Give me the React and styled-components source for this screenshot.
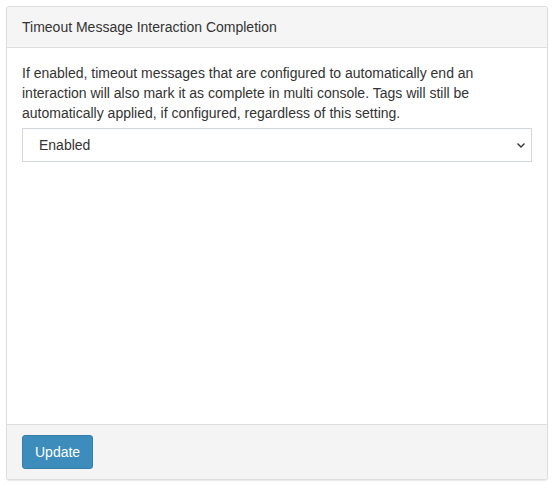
import React from 'react'
import styled, { createGlobalStyle } from 'styled-components'

const GlobalStyle = createGlobalStyle`
  body {
    margin: 0;
    background: #fff;
    font-family: "Liberation Sans", Arial, sans-serif;
    font-size: 14px;
    color: #333;
  }
`

const Page = styled.div`
  padding: 6px 9px 10px 6px;
`

const Panel = styled.div`
  display: flex;
  flex-direction: column;
  height: 474px;
  box-sizing: border-box;
  border: 1px solid #ddd;
  border-radius: 3px;
  box-shadow: 0 1px 1px rgba(0, 0, 0, 0.08);
  background: #fff;
`

const Heading = styled.div`
  padding: 10px 15px;
  line-height: 20px;
  background: #f5f5f5;
  border-bottom: 1px solid #ddd;
  border-radius: 3px 3px 0 0;
`

const Body = styled.div`
  flex: 1;
  padding: 15px;

  p {
    margin: 0 0 5px;
    line-height: 20px;
  }
`

const SelectWrap = styled.div`
  position: relative;

  svg {
    position: absolute;
    right: 6px;
    top: 13px;
    pointer-events: none;
  }
`

const Select = styled.select`
  appearance: none;
  width: 100%;
  height: 34px;
  box-sizing: border-box;
  padding: 0 16px;
  border: 1px solid #d2d6de;
  border-radius: 0;
  background: #fff;
  font-family: inherit;
  font-size: 14px;
  color: #333;
`

const Footer = styled.div`
  padding: 10px 15px;
  background: #f4f4f4;
  border-top: 1px solid #ddd;
  border-radius: 0 0 3px 3px;
`

const Button = styled.button`
  height: 34px;
  padding: 0 12px;
  background: #3c8dbc;
  border: 1px solid #367fa9;
  border-radius: 3px;
  color: #fff;
  font-family: inherit;
  font-size: 14px;
`

const App = () => (
  <Page>
    <GlobalStyle />
    <Panel>
      <Heading>Timeout Message Interaction Completion</Heading>
      <Body>
        <p>
          If enabled, timeout messages that are configured to automatically end an
          interaction will also mark it as complete in multi console. Tags will still be
          automatically applied, if configured, regardless of this setting.
        </p>
        <SelectWrap>
          <Select defaultValue="enabled">
            <option value="enabled">Enabled</option>
            <option value="disabled">Disabled</option>
          </Select>
          <svg width="10" height="8" viewBox="0 0 10 8">
            <path d="M1.5 2.5 L5 6 L8.5 2.5" fill="none" stroke="#333" strokeWidth="1.4" />
          </svg>
        </SelectWrap>
      </Body>
      <Footer>
        <Button>Update</Button>
      </Footer>
    </Panel>
  </Page>
)

export default App
